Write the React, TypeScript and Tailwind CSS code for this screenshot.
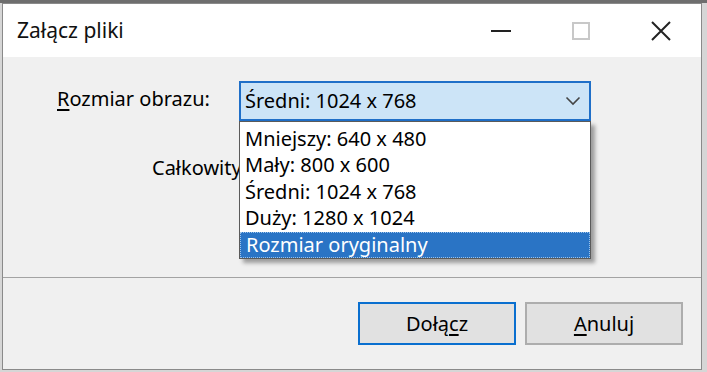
export default function App() {
  const items = ['Mniejszy: 640 x 480', 'Mały: 800 x 600', 'Średni: 1024 x 768', 'Duży: 1280 x 1024'];
  return (
    <div
      className="w-[707px] h-[372px] bg-[#d6d6d6] overflow-hidden text-black"
      style={{ fontFamily: '"Segoe UI", "Noto Sans", "Open Sans", sans-serif' }}
    >
      {/* edge of the window behind */}
      <div className="h-[3px] bg-[#6e6e6e]" />
      <div className="pl-[2px]">
        <div className="w-[700px] h-[367px] border border-[#8a8a8a] flex flex-col bg-[#f0f0f0]">
          {/* Title bar */}
          <div className="h-[53px] bg-white flex items-center shrink-0">
            <span className="pl-[14px] text-[21px] text-[#111]">Załącz pliki</span>
            <div className="ml-auto flex h-full">
              <div className="w-[80px] flex items-center justify-center">
                <div className="w-[20px] h-[2px] bg-[#222]" />
              </div>
              <div className="w-[80px] flex items-center justify-center">
                <div className="w-[18px] h-[18px] border-2 border-[#c8c8c8]" />
              </div>
              <div className="w-[80px] flex items-center justify-center">
                <svg width="22" height="22" viewBox="0 0 22 22">
                  <path d="M2 2 L20 20 M20 2 L2 20" stroke="#222" strokeWidth="2" fill="none" />
                </svg>
              </div>
            </div>
          </div>

          {/* Body */}
          <div className="h-[220px] relative shrink-0 pt-[24px]">
            <div className="flex items-center">
              <div className="w-[236px] pl-[54px] text-[20px] pb-[4px]">
                <span className="underline underline-offset-[3px]">R</span>ozmiar obrazu:
              </div>
              <div className="w-[352px] h-[40px] bg-[#cce4f7] border-2 border-[#1f6fc8] flex items-center pl-[4px] pr-[8px]">
                <span className="text-[20px]">Średni: 1024 x 768</span>
                <svg className="ml-auto" width="16" height="10" viewBox="0 0 16 10">
                  <path d="M1.5 1.5 L8 8 L14.5 1.5" stroke="#444" strokeWidth="1.6" fill="none" />
                </svg>
              </div>
            </div>
            <div className="mt-[32px] ml-[149px] w-[87px] overflow-hidden text-[20px] whitespace-nowrap">
              Całkowity rozmiar:
            </div>

            {/* Open list */}
            <div className="absolute left-[236px] top-[64px] w-[352px] h-[138px] bg-white border border-[#5a5a5a] pt-[4px] shadow-[4px_4px_4px_rgba(0,0,0,0.35)] z-10 flex flex-col">
              {items.map((t) => (
                <div key={t} className="h-[26.5px] pl-[5px] text-[20px] leading-[26px] whitespace-nowrap">
                  {t}
                </div>
              ))}
              <div className="h-[26.5px] pl-[5px] text-[20px] leading-[24px] text-white bg-[#2a74c5] border border-dotted border-[#9cc3ea]">
                Rozmiar oryginalny
              </div>
            </div>
          </div>

          <div className="h-[1px] bg-[#a3a3a3] shrink-0" />

          {/* Footer */}
          <div className="flex-1 flex justify-end items-start pt-[24px] pr-[18px] gap-[9px]">
            <button className="w-[158px] h-[43px] bg-[#e1e1e1] border-2 border-[#0a6fcf] text-[20px]">
              Dołą<span className="underline underline-offset-[3px]">c</span>z
            </button>
            <button className="w-[158px] h-[43px] bg-[#e1e1e1] border-2 border-[#adadad] text-[20px]">
              <span className="underline underline-offset-[3px]">A</span>nuluj
            </button>
          </div>
        </div>
      </div>
    </div>
  );
}
